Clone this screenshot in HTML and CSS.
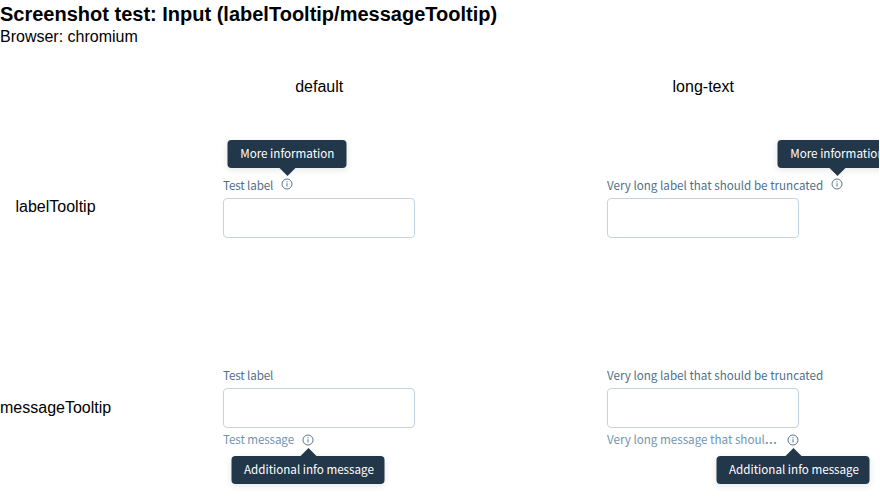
FILE: index.html
```html
<!DOCTYPE html>
<html lang="en">
<head>
<meta charset="utf-8">
<title>Screenshot test: Input</title>
<link rel="stylesheet" href="styles.css">
</head>
<body>
<svg class="defs" width="0" height="0"><symbol id="info" viewBox="0 0 12 12"><circle cx="6" cy="6" r="5" fill="none" stroke="currentColor"/><path d="M6 5.2V8.5M6 3.2V4.3" stroke="currentColor" fill="none"/></symbol></svg>
<h1>Screenshot test: Input (labelTooltip/messageTooltip)</h1>
<p class="browser">Browser: chromium</p>
<main class="matrix">
  <div></div><div class="head">default</div><div class="head">long-text</div>
  <div class="row-name first">labelTooltip</div>
  <div class="cell first"><div class="field">
    <div class="label"><span class="short">Test label</span><span class="info"><svg><use href="#info"/></svg><span class="tip above">More information</span></span></div>
    <input class="input" aria-label="Test label">
  </div></div>
  <div class="cell first"><div class="field">
    <div class="label"><span>Very long label that should be truncated</span><span class="info"><svg><use href="#info"/></svg><span class="tip above">More information</span></span></div>
    <input class="input" aria-label="Long label">
  </div></div>
  <div class="row-name second">messageTooltip</div>
  <div class="cell second"><div class="field">
    <div class="label"><span class="short">Test label</span></div>
    <input class="input" aria-label="Test label">
    <div class="message"><span class="text short">Test message</span><span class="info"><svg><use href="#info"/></svg><span class="tip below">Additional info message</span></span></div>
  </div></div>
  <div class="cell second"><div class="field">
    <div class="label"><span>Very long label that should be truncated</span></div>
    <input class="input" aria-label="Long label">
    <div class="message"><span class="text long">Very long message that shoul<span class="dots">…</span></span><span class="info"><svg><use href="#info"/></svg><span class="tip below">Additional info message</span></span></div>
  </div></div>
</main>
</body>
</html>
```
FILE: styles.css
```css
* { box-sizing: border-box; }
body { margin: 0; width: 879px; height: 498px; overflow: hidden; background: #fff; color: #000; font: 16px/18px "Liberation Sans", Arial, sans-serif; }
.defs { display: block; height: 0; }
h1 { margin: 0; padding-top: 3px; font-size: 20px; line-height: 23px; white-space: nowrap; }
.browser { margin: 0; padding-top: 2px; }
.matrix { display: grid; width: 879px; overflow: hidden; grid-template-columns: 111px 416px 352px; grid-template-rows: 82px 160px 210px; }
.head { padding: 32px 0 0 0.5px; text-align: center; }
.row-name { text-align: center; }
.row-name.first { padding-top: 70px; }
.row-name.second { padding-top: 111px; }
.cell { padding-left: 112px; min-width: 0; }
.cell + .cell { padding-left: 80px; }
.cell.first { padding-top: 48px; }
.cell.second { padding-top: 78px; }
.field { width: 192px; font: 11.63px/18px "Noto Sans CJK KR", sans-serif; }
.label { display: flex; height: 22px; gap: 8px; color: #4f6f88; white-space: nowrap; }
.label .short { letter-spacing: -0.13px; }
.message .short { letter-spacing: -0.1px; }
.input { display: block; width: 192px; height: 40px; border: 1px solid #c3d4e1; border-radius: 4px; background: #fff; padding: 0 12px; outline: 0; }
.message { display: flex; gap: 8px; padding-top: 2px; color: #7294af; white-space: nowrap; }
.text { min-width: 0; }
.text.long { width: 172px; }
.dots { font-family: "Noto Sans", sans-serif; font-size: 15.5px; line-height: 1; }
.info { position: relative; flex: none; width: 12px; height: 20px; color: #5f758a; }
.info svg { display: block; width: 12px; height: 12px; margin-top: 4px; }
.label .info svg { margin-top: 2px; }
.tip { position: absolute; left: 50%; transform: translateX(-50%); height: 28px; padding: 0 12px 0 12.5px; line-height: 26px; border-radius: 4px; background: #23374b; color: #fff; box-shadow: 0 2px 6px rgb(35 55 75 / 12%); white-space: nowrap; }
.tip::after { content: ""; position: absolute; left: 50%; margin-left: -7.5px; border: 8px solid transparent; }
.above { width: 119px; bottom: 28px; }
.above::after { top: 28px; border-bottom: 0; border-top-color: #23374b; }
.below { width: 153px; top: 26px; }
.below::after { bottom: 28px; border-top: 0; border-bottom-color: #23374b; }
```
